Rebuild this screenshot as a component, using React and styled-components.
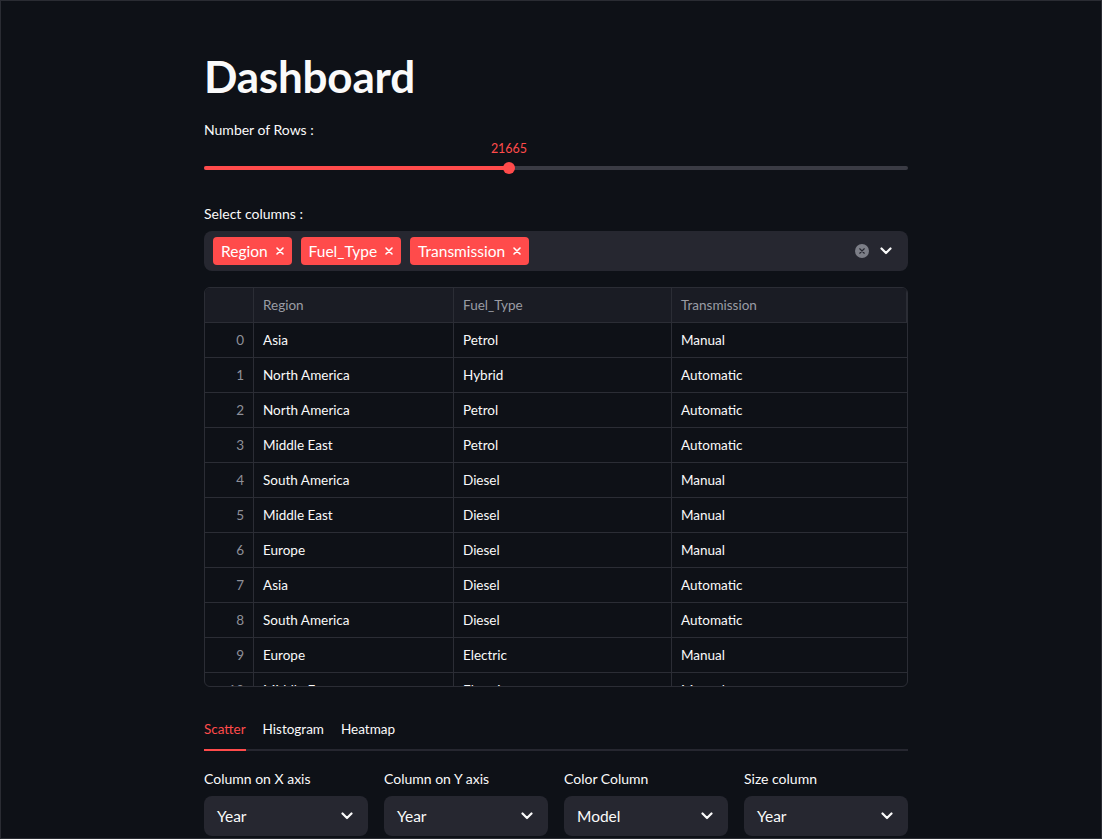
import React from "react";
import styled, { createGlobalStyle } from "styled-components";

const GlobalStyle = createGlobalStyle`
  html, body {
    margin: 0;
    padding: 0;
    background: #0e1117;
  }
  body {
    font-family: Lato, "Noto Sans", sans-serif;
    color: #fafafa;
  }
  * { box-sizing: border-box; }
`;

const Frame = styled.div`
  width: 1102px;
  height: 839px;
  overflow: hidden;
  border: 1px solid #2a2c33;
  background: #0e1117;
`;

const Main = styled.main`
  width: 704px;
  margin-left: 203px;
  padding-top: 50px;
  display: flex;
  flex-direction: column;
`;

const Title = styled.h1`
  margin: 0;
  font-size: 44px;
  font-weight: 700;
  line-height: 50px;
  letter-spacing: -0.2px;
`;

const Label = styled.div`
  font-size: 14px;
  line-height: 20px;
  color: #fafafa;
  margin-top: ${(p) => p.$mt || 0}px;
`;

const SliderWrap = styled.div`
  position: relative;
  height: 52px;
`;

const SliderValue = styled.div`
  position: absolute;
  top: 1px;
  transform: translateX(-50%);
  font-size: 12.5px;
  line-height: 16px;
  color: #ff4b4b;
`;

const Track = styled.div`
  position: absolute;
  left: 0;
  right: 0;
  top: 26px;
  height: 4px;
  border-radius: 2px;
  background: #3a3b44;
`;

const Fill = styled.div`
  height: 100%;
  border-radius: 2px;
  background: #ff4b4b;
`;

const Thumb = styled.div`
  position: absolute;
  top: 22px;
  width: 12px;
  height: 12px;
  margin-left: -6px;
  border-radius: 50%;
  background: #ff4b4b;
`;

const MultiSelect = styled.div`
  margin-top: 7px;
  height: 40px;
  border-radius: 8px;
  background: #262730;
  display: flex;
  align-items: center;
  padding: 0 16px 0 9px;
  gap: 9px;
`;

const Tag = styled.div`
  height: 28px;
  background: #ff4b4b;
  border-radius: 4px;
  display: flex;
  align-items: center;
  gap: 8px;
  padding: 0 8px 0 8px;
  font-size: 15.5px;
  color: #fff;
`;

const Spacer = styled.div`
  flex: 1;
`;

const ClearIcon = styled.div`
  width: 14px;
  height: 14px;
  border-radius: 50%;
  background: #7c7e87;
  display: flex;
  align-items: center;
  justify-content: center;
  margin-right: 2px;
`;

const TableBox = styled.div`
  margin-top: 16px;
  height: 400px;
  border: 1px solid #2b2d35;
  border-radius: 6px;
  overflow: hidden;
`;

const Grid = styled.div`
  display: grid;
  grid-template-columns: 49px 200px 218px 1fr;
`;

const HeadCell = styled.div`
  height: 35px;
  display: flex;
  align-items: center;
  padding: 0 9px;
  font-size: 13.5px;
  color: #9a9ca4;
  background: #1a1c24;
  border-right: 1px solid #2b2d35;
  border-bottom: 1px solid #2b2d35;
  &:last-child { border-right: none; }
`;

const Cell = styled.div`
  height: 35px;
  display: flex;
  align-items: center;
  justify-content: ${(p) => (p.$index ? "flex-end" : "flex-start")};
  padding: 0 9px;
  font-size: 13.5px;
  color: ${(p) => (p.$index ? "#8e9099" : "#fafafa")};
  border-right: ${(p) => (p.$last ? "none" : "1px solid #2b2d35")};
  border-bottom: 1px solid #2b2d35;
`;

const Tabs = styled.div`
  margin-top: 32px;
  display: flex;
  gap: 17px;
  border-bottom: 2px solid #262730;
`;

const Tab = styled.div`
  font-size: 13.5px;
  line-height: 20px;
  padding: 0 0 10px;
  margin-bottom: -2px;
  color: ${(p) => (p.$active ? "#ff4b4b" : "#fafafa")};
  border-bottom: 2px solid ${(p) => (p.$active ? "#ff4b4b" : "transparent")};
`;

const Controls = styled.div`
  margin-top: 18px;
  display: grid;
  grid-template-columns: repeat(4, 1fr);
  gap: 16px;
`;

const Control = styled.div`
  display: flex;
  flex-direction: column;
  gap: 7px;
`;

const Select = styled.div`
  height: 40px;
  border-radius: 8px;
  background: #262730;
  display: flex;
  align-items: center;
  justify-content: space-between;
  padding: 0 15px 0 13px;
  font-size: 15.5px;
`;

const Chevron = () => (
  <svg width="12" height="8" viewBox="0 0 12 8" fill="none">
    <path d="M1.5 1.5L6 6l4.5-4.5" stroke="#fafafa" strokeWidth="2.2" strokeLinecap="round" strokeLinejoin="round" />
  </svg>
);

const Cross = ({ size = 8, color = "#fff", width = 1.6 }) => (
  <svg width={size} height={size} viewBox="0 0 8 8">
    <path d="M1 1l6 6M7 1L1 7" stroke={color} strokeWidth={width} strokeLinecap="round" />
  </svg>
);

const rows = [
  ["Asia", "Petrol", "Manual"],
  ["North America", "Hybrid", "Automatic"],
  ["North America", "Petrol", "Automatic"],
  ["Middle East", "Petrol", "Automatic"],
  ["South America", "Diesel", "Manual"],
  ["Middle East", "Diesel", "Manual"],
  ["Europe", "Diesel", "Manual"],
  ["Asia", "Diesel", "Automatic"],
  ["South America", "Diesel", "Automatic"],
  ["Europe", "Electric", "Manual"],
  ["Middle East", "Electric", "Manual"],
];

const controls = [
  ["Column on X axis", "Year"],
  ["Column on Y axis", "Year"],
  ["Color Column", "Model"],
  ["Size column", "Year"],
];

const pct = 305 / 704;

export default function App() {
  return (
    <>
      <GlobalStyle />
      <Frame>
        <Main>
          <Title>Dashboard</Title>
          <Label $mt={19}>Number of Rows :</Label>
          <SliderWrap>
            <SliderValue style={{ left: `${pct * 100}%` }}>21665</SliderValue>
            <Track>
              <Fill style={{ width: `${pct * 100}%` }} />
            </Track>
            <Thumb style={{ left: `${pct * 100}%` }} />
          </SliderWrap>
          <Label $mt={12}>Select columns :</Label>
          <MultiSelect>
            {["Region", "Fuel_Type", "Transmission"].map((t) => (
              <Tag key={t}>
                {t}
                <Cross />
              </Tag>
            ))}
            <Spacer />
            <ClearIcon>
              <Cross size={6} color="#262730" width={1.5} />
            </ClearIcon>
            <Chevron />
          </MultiSelect>
          <TableBox>
            <Grid>
              <HeadCell />
              <HeadCell>Region</HeadCell>
              <HeadCell>Fuel_Type</HeadCell>
              <HeadCell>Transmission</HeadCell>
              {rows.map((r, i) => (
                <React.Fragment key={i}>
                  <Cell $index>{i}</Cell>
                  <Cell>{r[0]}</Cell>
                  <Cell>{r[1]}</Cell>
                  <Cell $last>{r[2]}</Cell>
                </React.Fragment>
              ))}
            </Grid>
          </TableBox>
          <Tabs>
            <Tab $active>Scatter</Tab>
            <Tab>Histogram</Tab>
            <Tab>Heatmap</Tab>
          </Tabs>
          <Controls>
            {controls.map(([label, value]) => (
              <Control key={label}>
                <Label>{label}</Label>
                <Select>
                  {value}
                  <Chevron />
                </Select>
              </Control>
            ))}
          </Controls>
        </Main>
      </Frame>
    </>
  );
}
